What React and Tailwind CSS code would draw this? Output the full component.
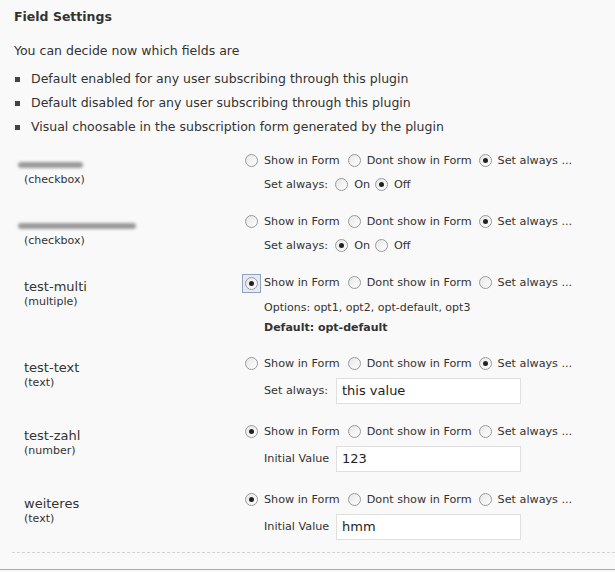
import React from 'react';

const font = { fontFamily: '"DejaVu Sans", Verdana, sans-serif' };

function Radio({ checked, focus }) {
  const dot = (
    <span className="flex h-[13px] w-[13px] items-center justify-center rounded-full border border-[#999] bg-gradient-to-br from-[#e6e6e6] to-white">
      {checked && <span className="h-[5px] w-[5px] rounded-full bg-[#222]" />}
    </span>
  );
  if (focus) {
    return (
      <span className="-mx-[3px] flex h-[19px] w-[19px] items-center justify-center border border-[#8da2c4] bg-[#e6ebf3]">
        {dot}
      </span>
    );
  }
  return dot;
}

function Choice({ checked, focus, label, gap = 'mr-[8px]' }) {
  return (
    <span className={`flex items-center ${gap}`}>
      <Radio checked={checked} focus={focus} />
      <span className="ml-[6px]">{label}</span>
    </span>
  );
}

function Mode({ value, focus }) {
  return (
    <div className="flex h-[24px] items-center text-[11.2px] text-[#333]">
      <Choice checked={value === 'show'} focus={focus} label="Show in Form" />
      <Choice checked={value === 'hide'} label="Dont show in Form" gap="mr-[7px]" />
      <Choice checked={value === 'always'} label="Set always ..." />
    </div>
  );
}

function TextInput({ value }) {
  return (
    <div className="flex h-[26px] w-[185px] items-center border border-[#dfdfdf] bg-white px-[5px] text-[13px] text-[#222]">
      {value}
    </div>
  );
}

const fields = [
  { blur: 'w-[65px]', type: 'checkbox', mode: 'always', on: false },
  { blur: 'w-[118px]', type: 'checkbox', mode: 'always', on: true },
  { name: 'test-multi', type: 'multiple', mode: 'show', focus: true },
  { name: 'test-text', type: 'text', mode: 'always', input: 'this value' },
  { name: 'test-zahl', type: 'number', mode: 'show', input: '123' },
  { name: 'weiteres', type: 'text', mode: 'show', input: 'hmm' },
];

function FieldRow({ f }) {
  return (
    <div className="flex">
      <div className="w-[231px] pt-[8px] pl-[10px] text-[#333]">
        {f.name ? (
          <div className="h-[16px] text-[13px] leading-[16px]">{f.name}</div>
        ) : (
          <div className="flex h-[16px] items-center">
            <div className={`${f.blur} -ml-[6px] h-[6px] rounded-sm bg-[#9a9a9a] blur-[1.5px]`} />
          </div>
        )}
        <div className="h-[14px] text-[11px] leading-[14px]">({f.type})</div>
      </div>
      <div className="flex-1">
        <Mode value={f.mode} focus={f.focus} />
        {f.type === 'checkbox' && (
          <div className="flex h-[24px] items-center pl-[19px] text-[11.2px] text-[#333]">
            <span className="mr-[7px]">Set always:</span>
            <Choice checked={f.on} label="On" gap="mr-[5px]" />
            <Choice checked={!f.on} label="Off" />
          </div>
        )}
        {f.type === 'multiple' && (
          <div className="pt-[3px] pl-[19px] text-[11px] text-[#333]">
            <div className="h-[20px] leading-[20px]">Options: opt1, opt2, opt-default, opt3</div>
            <div className="h-[20px] font-bold leading-[20px]">Default: opt-default</div>
          </div>
        )}
        {f.input && (
          <div className="mt-[2px] flex items-center pl-[19px] text-[11.2px] text-[#333]">
            <span className="w-[72px]">{f.mode === 'always' ? 'Set always:' : 'Initial Value'}</span>
            <TextInput value={f.input} />
          </div>
        )}
      </div>
    </div>
  );
}

export default function App() {
  const pads = ['pb-[13px]', 'pb-[13px]', 'pb-[14px]', 'pb-[16px]', 'pb-[16px]', 'pb-[12px]'];
  return (
    <div style={font} className="h-[572px] w-[615px] overflow-hidden bg-[#f9f9f9] text-[#333]">
      <div className="h-[570px] border-b border-[#a9a9a9]">
        <div className="pl-[14px] pt-[8px]">
          <h2 className="h-[18px] text-[12.5px] font-bold leading-[18px] text-[#333]">Field Settings</h2>
          <p className="mt-[17px] h-[16px] text-[12.5px] leading-[16px]">You can decide now which fields are</p>
          <ul className="mt-[8px] text-[12.5px]">
            {[
              'Default enabled for any user subscribing through this plugin',
              'Default disabled for any user subscribing through this plugin',
              'Visual choosable in the subscription form generated by the plugin',
            ].map((t) => (
              <li key={t} className="flex h-[24px] items-center">
                <span className="ml-[1px] mr-[11px] h-[5px] w-[5px] bg-[#444]" />
                {t}
              </li>
            ))}
          </ul>
          <div className="mt-[10px]">
            {fields.map((f, i) => (
              <div key={i} className={pads[i]}>
                <FieldRow f={f} />
              </div>
            ))}
          </div>
        </div>
        <div className="ml-[12px] border-t border-dashed border-[#d4d4d4]" />
      </div>
    </div>
  );
}
